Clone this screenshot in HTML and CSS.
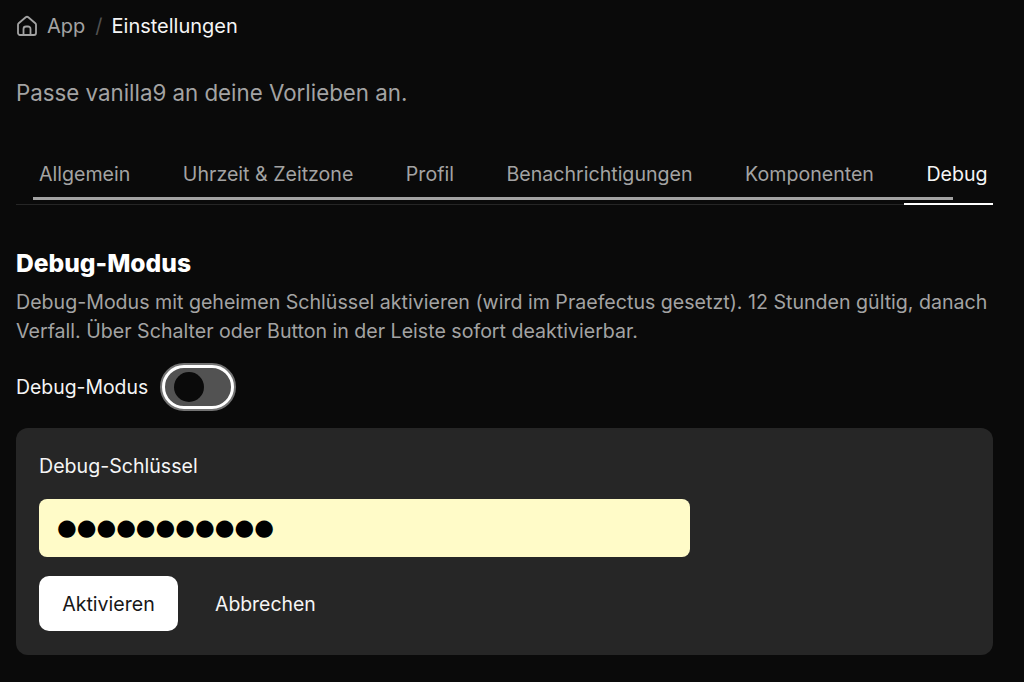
FILE: index.html
```html
<!DOCTYPE html>
<html lang="de">
<head>
    <meta charset="UTF-8">
    <meta name="viewport" content="width=device-width, initial-scale=1.0">
    <title>Einstellungen</title>
    <link rel="stylesheet" href="styles.css">
</head>
<body>
    <nav class="breadcrumb">
        <svg class="home-icon" width="24" height="24" viewBox="0 0 24 24" fill="none" stroke="currentColor" stroke-width="1.8" stroke-linecap="round" stroke-linejoin="round">
            <path d="M3 10.8a2 2 0 0 1 .7-1.5l7-6a2 2 0 0 1 2.6 0l7 6a2 2 0 0 1 .7 1.5V19a2 2 0 0 1-2 2H5a2 2 0 0 1-2-2z"/>
            <path d="M8.5 21v-6a2.500 2.500 0 0 1 2.500-2.500h2a2.500 2.500 0 0 1 2.500 2.500v6"/>
        </svg>
        <a class="crumb">App</a>
        <span class="crumb-sep">/</span>
        <span class="crumb-current">Einstellungen</span>
    </nav>

    <p class="lead">Passe vanilla9 an deine Vorlieben an.</p>

    <div class="tabs">
        <a class="tab">Allgemein</a>
        <a class="tab">Uhrzeit &amp; Zeitzone</a>
        <a class="tab">Profil</a>
        <a class="tab">Benachrichtigungen</a>
        <a class="tab">Komponenten</a>
        <a class="tab active">Debug</a>
        <div class="tabs-scrollbar"></div>
    </div>

    <h2>Debug-Modus</h2>
    <p class="desc">Debug-Modus mit geheimen Schlüssel aktivieren (wird im Praefectus gesetzt). 12 Stunden gültig, danach Verfall. Über Schalter oder Button in der Leiste sofort deaktivierbar.</p>

    <div class="switch-row">
        <span>Debug-Modus</span>
        <div class="switch"><div class="knob"></div></div>
    </div>

    <div class="panel">
        <label class="field-label">Debug-Schlüssel</label>
        <div class="key-input">●●●●●●●●●●●</div>
        <div class="actions">
            <button class="btn-primary">Aktivieren</button>
            <button class="btn-ghost">Abbrechen</button>
        </div>
    </div>
</body>
</html>
```

FILE: styles.css
```css
html, body {
    height: 100%;
}
body {
    margin: 0;
    padding: 0 31px 0 16px;
    background-color: #0a0a0a;
    color: #fff;
    font-family: Inter, "Liberation Sans", sans-serif;
    overflow: hidden;
}
.breadcrumb {
    display: flex;
    align-items: center;
    height: 24px;
    padding-top: 14px;
    font-size: 20px;
}
.home-icon {
    color: #a3a3a3;
    margin-right: 8px;
    margin-left: -1px;
}
.crumb {
    color: #a3a3a3;
}
.crumb-sep {
    color: #525252;
    margin: 0 9px 0 10px;
}
.crumb-current {
    color: #f5f5f5;
}
.lead {
    margin: 40px 0 0;
    height: 30px;
    line-height: 30px;
    font-size: 22.3px;
    color: #a3a3a3;
}
.tabs {
    position: relative;
    display: flex;
    gap: 52.5px;
    margin-top: 55px;
    height: 41px;
    padding: 0 0 0 23px;
    border-bottom: 1px solid #262626;
    font-size: 19.6px;
    white-space: nowrap;
}
.tab {
    color: #a3a3a3;
    line-height: 22px;
}
.tab.active {
    color: #f5f5f5;
}
.tab.active::after {
    content: "";
    position: absolute;
    right: 0;
    bottom: -1px;
    width: 89px;
    height: 2px;
    background-color: #fff;
}
.tabs-scrollbar {
    position: absolute;
    left: 17px;
    bottom: 4px;
    width: 920px;
    height: 3px;
    background-color: #a3a3a3;
}
h2 {
    margin: 42px 0 0;
    font-size: 24.6px;
    line-height: 32px;
    font-weight: 800;
}
.desc {
    margin: 9px 0 0;
    font-size: 19.6px;
    line-height: 29px;
    color: #a3a3a3;
}
.switch-row {
    display: flex;
    align-items: center;
    gap: 13px;
    margin-top: 18px;
    font-size: 19.4px;
    color: #f5f5f5;
}
.switch {
    box-sizing: border-box;
    width: 74px;
    height: 46px;
    padding: 4px 0 0 9px;
    background-color: #525252;
    border: 4px solid #fff;
    outline: 2px solid #737373;
    outline-offset: -1px;
    border-radius: 23px;
}
.knob {
    width: 30px;
    height: 30px;
    border-radius: 50%;
    background-color: #0a0a0a;
}
.panel {
    margin-top: 18px;
    padding: 25px 23px 24px;
    background-color: #262626;
    border-radius: 12px;
}
.field-label {
    display: block;
    font-size: 19.6px;
    line-height: 26px;
    color: #f5f5f5;
}
.key-input {
    box-sizing: border-box;
    width: 651px;
    height: 58px;
    margin-top: 20px;
    padding-left: 18px;
    background-color: #fffbc8;
    border-radius: 8px;
    color: #000;
    font-family: "DejaVu Sans", sans-serif;
    font-size: 22.6px;
    line-height: 56px;
}
.actions {
    display: flex;
    align-items: center;
    gap: 37px;
    margin-top: 19px;
}
button {
    font-family: inherit;
    font-size: 19.6px;
    border: none;
    background: none;
    padding: 0;
}
.btn-primary {
    width: 139px;
    height: 55px;
    background-color: #fff;
    color: #171717;
    border-radius: 10px;
}
.btn-ghost {
    color: #f5f5f5;
    font-size: 19.4px;
}
```
